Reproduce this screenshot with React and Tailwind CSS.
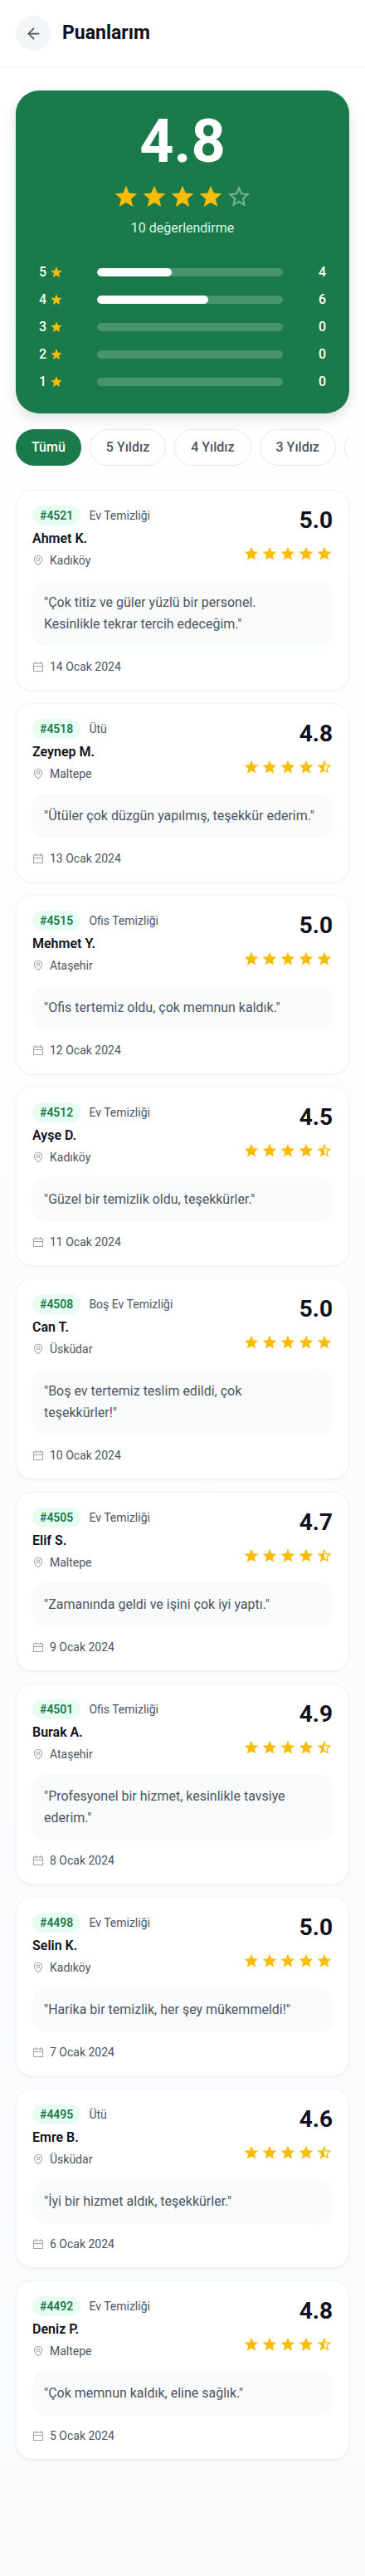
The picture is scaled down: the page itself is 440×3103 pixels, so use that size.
import { useState } from "react";
import { MdStar, MdStarBorder, MdStarHalf } from "react-icons/md";
import { ArrowLeft, MapPin } from "lucide-react";

const reviews = [
  { id: 4521, service: "Ev Temizliği", name: "Ahmet K.", district: "Kadıköy", rating: 5.0, comment: "Çok titiz ve güler yüzlü bir personel.\nKesinlikle tekrar tercih edeceğim.", date: "14 Ocak 2024" },
  { id: 4518, service: "Ütü", name: "Zeynep M.", district: "Maltepe", rating: 4.8, comment: "Ütüler çok düzgün yapılmış, teşekkür ederim.", date: "13 Ocak 2024" },
  { id: 4515, service: "Ofis Temizliği", name: "Mehmet Y.", district: "Ataşehir", rating: 5.0, comment: "Ofis tertemiz oldu, çok memnun kaldık.", date: "12 Ocak 2024" },
  { id: 4512, service: "Ev Temizliği", name: "Ayşe D.", district: "Kadıköy", rating: 4.5, comment: "Güzel bir temizlik oldu, teşekkürler.", date: "11 Ocak 2024" },
  { id: 4508, service: "Boş Ev Temizliği", name: "Can T.", district: "Üsküdar", rating: 5.0, comment: "Boş ev tertemiz teslim edildi, çok\nteşekkürler!", date: "10 Ocak 2024" },
  { id: 4505, service: "Ev Temizliği", name: "Elif S.", district: "Maltepe", rating: 4.7, comment: "Zamanında geldi ve işini çok iyi yaptı.", date: "9 Ocak 2024" },
  { id: 4501, service: "Ofis Temizliği", name: "Burak A.", district: "Ataşehir", rating: 4.9, comment: "Profesyonel bir hizmet, kesinlikle tavsiye ederim.", date: "8 Ocak 2024" },
  { id: 4498, service: "Ev Temizliği", name: "Selin K.", district: "Kadıköy", rating: 5.0, comment: "Harika bir temizlik, her şey mükemmeldi!", date: "7 Ocak 2024" },
  { id: 4495, service: "Ütü", name: "Emre B.", district: "Üsküdar", rating: 4.6, comment: "İyi bir hizmet aldık, teşekkürler.", date: "6 Ocak 2024" },
  { id: 4492, service: "Ev Temizliği", name: "Deniz P.", district: "Maltepe", rating: 4.8, comment: "Çok memnun kaldık, eline sağlık.", date: "5 Ocak 2024" },
];

const levels = [5, 4, 3, 2, 1];

function CalendarIcon() {
  return (
    <svg
      viewBox="0 0 24 24"
      fill="none"
      stroke="currentColor"
      strokeWidth="1.75"
      className="size-3.5 text-[#9ca3af]"
      aria-hidden="true"
    >
      <path d="M2.5 5h19v16.5h-19zM2.5 11h19M7.5 1.5v5.5M16.5 1.5v5.5" />
    </svg>
  );
}

function ReviewStars({ rating }) {
  return (
    <div className="flex gap-0.5 text-[#fbbc05]">
      {[1, 2, 3, 4, 5].map((n) =>
        rating >= n ? <MdStar key={n} size={20} /> : <MdStarHalf key={n} size={20} />
      )}
    </div>
  );
}

function Summary() {
  const average = reviews.reduce((sum, r) => sum + r.rating, 0) / reviews.length;

  return (
    <section className="rounded-[28px] bg-[#1a7a4a] p-7 text-white shadow-[0_6px_16px_rgba(0,0,0,0.12)]">
      <div className="flex flex-col items-center">
        <div className="text-7xl font-bold leading-[68px]">{average.toFixed(1)}</div>
        <div className="mt-4 flex gap-0.5 text-[#fbbc05]">
          {[1, 2, 3, 4, 5].map((n) =>
            average >= n ? (
              <MdStar key={n} size={32} />
            ) : (
              <MdStarBorder key={n} size={32} className="text-white/40" />
            )
          )}
        </div>
        <p className="mt-2.5 text-base leading-6 text-[#dcf5e6]">{reviews.length} değerlendirme</p>
      </div>
      <div className="mt-7.5 flex flex-col gap-3">
        {levels.map((level) => {
          const count = reviews.filter((r) => Math.floor(r.rating) === level).length;
          return (
            <div key={level} className="flex items-center text-base font-medium leading-[21px]">
              <span className="flex w-[70px] items-center gap-1">
                {level}
                <MdStar size={16} className="text-[#fbbc05]" />
              </span>
              <div className="h-2.5 flex-1 overflow-hidden rounded-full bg-white/20">
                <div
                  className="h-full rounded-full bg-white"
                  style={{ width: `${(count / reviews.length) * 100}%` }}
                />
              </div>
              <span className="w-13 text-right">{count}</span>
            </div>
          );
        })}
      </div>
    </section>
  );
}

function ReviewCard({ review }) {
  return (
    <article className="rounded-[20px] border border-[#f3f4f6] bg-white px-[19px] py-[18px] shadow-[0_1px_3px_rgba(0,0,0,0.06)]">
      <div className="flex items-start justify-between">
        <div>
          <div className="flex items-center gap-2.5">
            <span className="rounded-full bg-[#e8fdf1] px-[9px] py-1 text-sm font-semibold leading-4 text-[#1a7a4a]">
              #{review.id}
            </span>
            <span className="text-sm leading-5 text-[#4b5563]">{review.service}</span>
          </div>
          <h2 className="mt-1 text-base font-semibold leading-6 text-[#0f1020]">{review.name}</h2>
          <p className="mt-1 flex items-center gap-[7px] text-sm leading-5 text-[#4b5563]">
            <MapPin size={14} strokeWidth={1.75} className="text-[#9ca3af]" />
            {review.district}
          </p>
        </div>
        <div className="flex flex-col items-end gap-3.5 pt-0.5">
          <span className="text-[28px] font-bold leading-8 text-[#0f1020]">{review.rating.toFixed(1)}</span>
          <ReviewStars rating={review.rating} />
        </div>
      </div>
      <p className="mt-3.5 whitespace-pre-line rounded-2xl bg-[#f9fafb] p-3.5 text-base leading-[26px] text-[#4b5563]">
        "{review.comment}"
      </p>
      <p className="mt-3.5 flex items-center gap-[7px] text-sm leading-5 text-[#4b5563]">
        <CalendarIcon />
        {review.date}
      </p>
    </article>
  );
}

export default function App() {
  const [filter, setFilter] = useState(null);
  const visible = filter ? reviews.filter((r) => Math.floor(r.rating) === filter) : reviews;

  return (
    <div className="min-h-screen bg-linear-to-b from-white to-[#f9fafc] font-[Roboto,sans-serif]">
      <header className="flex items-center gap-3.5 border-b border-[#f3f4f6] bg-white p-[19px]">
        <button
          type="button"
          aria-label="Geri"
          className="flex size-[42px] items-center justify-center rounded-full bg-[#f3f5f7] text-[#4b5563]"
        >
          <ArrowLeft size={21} strokeWidth={2} />
        </button>
        <h1 className="text-[23px] font-bold leading-8 text-[#0f1020]">Puanlarım</h1>
      </header>
      <main className="px-[19px] pt-7 pb-35">
        <Summary />
        <nav className="mt-[19px] flex gap-2.5 overflow-x-auto [scrollbar-width:none]">
          {[null, ...levels].map((level) => (
            <button
              key={level ?? "all"}
              type="button"
              onClick={() => setFilter(level)}
              className={
                level === filter
                  ? "h-11 shrink-0 rounded-full bg-[#1a7a4a] px-[19px] text-base font-medium text-white"
                  : "h-11 shrink-0 rounded-full border border-[#e5e7eb] bg-white px-[19px] text-base font-medium text-[#4b5563]"
              }
            >
              {level ? `${level} Yıldız` : "Tümü"}
            </button>
          ))}
        </nav>
        <div className="mt-[29px] flex flex-col gap-[15px]">
          {visible.map((r) => (
            <ReviewCard key={r.id} review={r} />
          ))}
        </div>
      </main>
    </div>
  );
}
